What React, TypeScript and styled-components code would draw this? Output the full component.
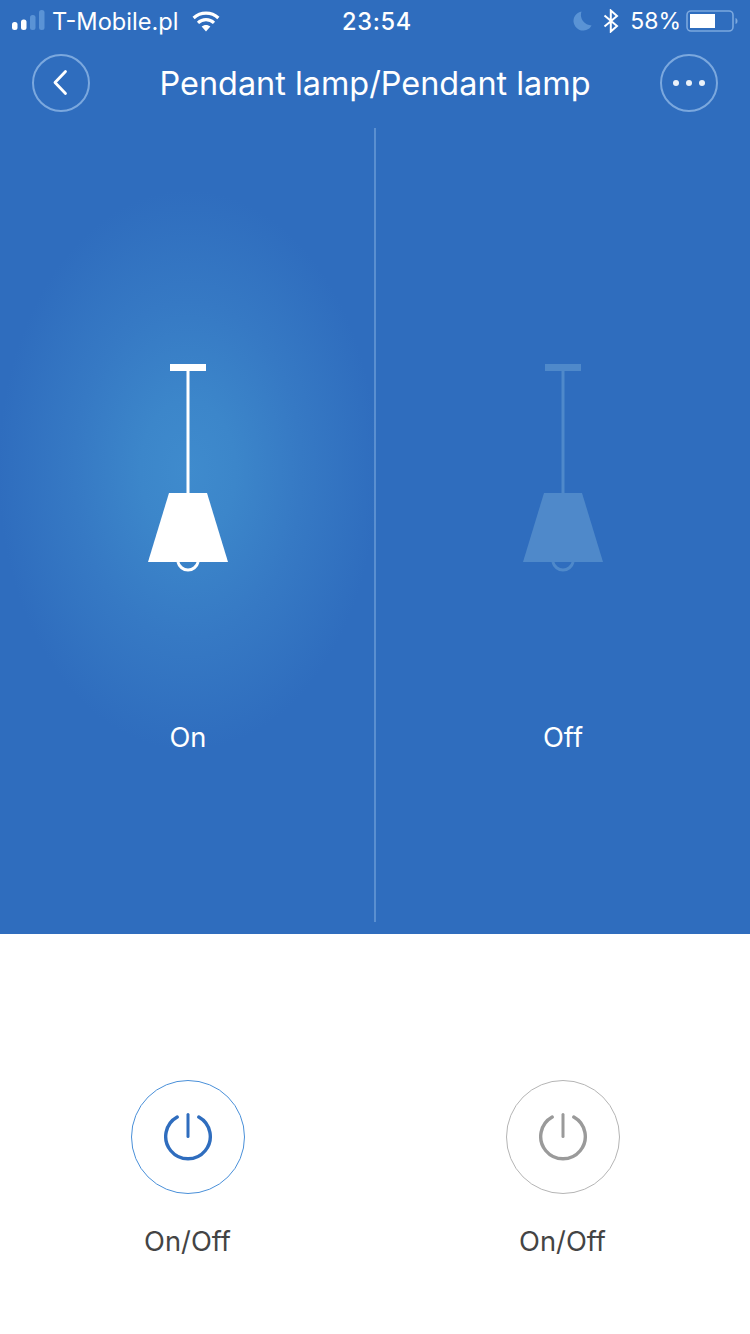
import styled, { createGlobalStyle } from "styled-components";

const BLUE = "#2f6dbe";
const DIM = "#5a93d5";
const FONT = `Inter, "Noto Sans", "Liberation Sans", sans-serif`;

const GlobalStyle = createGlobalStyle`
  html, body {
    margin: 0;
    padding: 0;
    background: #fff;
    font-family: ${FONT};
  }
  * {
    box-sizing: border-box;
  }
`;

const Page = styled.div`
  width: 750px;
  height: 1334px;
  display: flex;
  flex-direction: column;
  overflow: hidden;
`;

const TopArea = styled.div`
  height: 934px;
  background: ${BLUE};
  color: #fff;
  display: flex;
  flex-direction: column;
`;

const StatusBar = styled.div`
  height: 42px;
  display: grid;
  grid-template-columns: 1fr auto 1fr;
  align-items: center;
  padding: 0 12px;
  font-size: 23.6px;
`;

const StatusLeft = styled.div`
  display: flex;
  align-items: center;
`;

const StatusRight = styled.div`
  display: flex;
  align-items: center;
  justify-content: flex-end;
`;

const Carrier = styled.span`
  margin-left: 7px;
  margin-right: 14px;
`;

const Clock = styled.span`
  font-weight: 500;
  letter-spacing: 0.7px;
  margin-left: 4px;
`;

const Percent = styled.span`
  font-size: 23px;
  margin-left: 11px;
  margin-right: 5px;
`;

const NavBar = styled.div`
  height: 86px;
  display: flex;
  align-items: flex-start;
  justify-content: space-between;
  padding: 12px 32px 0;
`;

const RoundButton = styled.div`
  width: 58px;
  height: 58px;
  border-radius: 50%;
  border: 2px solid #7ba8de;
  display: flex;
  align-items: center;
  justify-content: center;
`;

const Title = styled.div`
  font-size: 32.4px;
  line-height: 60px;
  font-weight: 400;
  white-space: nowrap;
`;

const Panels = styled.div`
  flex: 1;
  display: flex;
`;

const LampColumn = styled.div<{ $glow?: boolean }>`
  width: 374px;
  height: 806px;
  padding-top: 236px;
  padding-left: ${(p) => (p.$glow ? "2px" : "0")};
  display: flex;
  flex-direction: column;
  align-items: center;
  background: ${(p) =>
    p.$glow
      ? "radial-gradient(ellipse 190px 280px at 188px 342px, #3f8bcd 0%, #3c86ca 25%, #3679c4 60%, #2f6dbe 100%)"
      : "none"};
`;

const Divider = styled.div`
  width: 2px;
  height: 794px;
  background: #5a8fd0;
`;

const LampIcon = styled.svg<{ $off?: boolean }>`
  display: block;
  width: 80px;
  height: 208px;
  color: ${(p) => (p.$off ? "#4f89ca" : "#fff")};
`;

const LampLabel = styled.div`
  margin-top: 149px;
  font-size: 27.3px;
  line-height: 34px;
`;

const Controls = styled.div`
  flex: 1;
  display: flex;
  padding-top: 146px;
`;

const Control = styled.div`
  flex: 1;
  display: flex;
  flex-direction: column;
  align-items: center;
`;

const PowerButton = styled.div<{ $color: string }>`
  width: 114px;
  height: 114px;
  border-radius: 50%;
  border: 1px solid ${(p) => p.$color};
  display: flex;
  align-items: center;
  justify-content: center;
`;

const ControlLabel = styled.div`
  margin-top: 31px;
  font-size: 27.3px;
  line-height: 34px;
  color: #444;
`;

const SignalBars = () => (
  <svg width="33" height="22" viewBox="0 0 33 22" style={{ display: "block" }}>
    <rect x="0" y="12" width="5.5" height="8" rx="2.5" fill="#fff" />
    <rect x="9" y="9.5" width="5.5" height="10.5" rx="2.5" fill="#fff" />
    <rect x="18" y="5" width="5.5" height="15" rx="2.5" fill={DIM} />
    <rect x="27" y="0" width="5.5" height="20" rx="2.5" fill={DIM} />
  </svg>
);

const WifiIcon = () => (
  <svg width="28" height="21" viewBox="0 0 28 21" style={{ display: "block" }}>
    <path d="M14 20.5 L9.6 15.6 C12 13.4 16 13.4 18.4 15.6 Z" fill="#fff" />
    <path d="M6 11.8 C10.5 7.6 17.5 7.6 22 11.8" fill="none" stroke="#fff" strokeWidth="3.2" />
    <path d="M1.6 7 C8.6 0.6 19.4 0.6 26.4 7" fill="none" stroke="#fff" strokeWidth="3.2" />
  </svg>
);

const MoonIcon = () => (
  <svg width="19" height="20" viewBox="0 0 19 20" style={{ display: "block", marginRight: 11 }}>
    <path d="M8.5 0.5 A9.6 9.6 0 1 0 18.6 14.4 A10.5 10.5 0 0 1 8.5 0.5 Z" fill={DIM} />
  </svg>
);

const BluetoothIcon = () => (
  <svg width="16" height="24" viewBox="0 0 16 24" style={{ display: "block" }}>
    <path
      d="M1.5 6.5 L14 17 L7.8 22.5 V1.5 L14 7 L1.5 17.5"
      fill="none"
      stroke="#fff"
      strokeWidth="2"
    />
  </svg>
);

const Battery = () => (
  <svg width="52" height="22" viewBox="0 0 52 22" style={{ display: "block" }}>
    <rect x="1" y="1" width="46" height="20" rx="4" fill="none" stroke="#7ba8de" strokeWidth="1.6" />
    <rect x="4" y="4" width="25" height="14" fill="#fff" />
    <path d="M49.5 8 C51 8.5 51.5 9.5 51.5 11 C51.5 12.5 51 13.5 49.5 14 Z" fill="#7ba8de" />
  </svg>
);

const BackChevron = () => (
  <svg width="20" height="30" viewBox="0 0 20 30">
    <path
      d="M14.5 3.5 L4 14.5 L14.5 25.5"
      fill="none"
      stroke="#fff"
      strokeWidth="2.8"
      strokeLinecap="round"
      strokeLinejoin="round"
    />
  </svg>
);

const MoreDots = () => (
  <svg width="34" height="8" viewBox="0 0 34 8">
    <circle cx="4" cy="4" r="3" fill="#fff" fillOpacity="0.9" />
    <circle cx="17" cy="4" r="3" fill="#fff" fillOpacity="0.9" />
    <circle cx="30" cy="4" r="3" fill="#fff" fillOpacity="0.9" />
  </svg>
);

const Lamp = ({ off }: { off?: boolean }) => (
  <LampIcon $off={off} viewBox="0 0 80 208">
    <rect x="22" y="0" width="36" height="7" fill="currentColor" />
    <rect x="38.5" y="7" width="3" height="122" fill="currentColor" />
    <path d="M21 129 H59 L80 198 H0 Z" fill="currentColor" />
    <path
      d="M29.9 198 A10.4 10.4 0 0 0 50.1 198"
      fill="none"
      stroke="currentColor"
      strokeWidth="3"
    />
  </LampIcon>
);

const PowerIcon = ({ color }: { color: string }) => (
  <svg width="50" height="50" viewBox="0 0 50 50">
    <path
      d="M14.2 5 A22.3 22.3 0 1 0 35.8 5"
      fill="none"
      stroke={color}
      strokeWidth="3.4"
      strokeLinecap="round"
    />
    <line x1="25" y1="2.5" x2="25" y2="24.5" stroke={color} strokeWidth="3" strokeLinecap="round" />
  </svg>
);

export default function App() {
  return (
    <Page>
      <GlobalStyle />
      <TopArea>
        <StatusBar>
          <StatusLeft>
            <SignalBars />
            <Carrier>T-Mobile.pl</Carrier>
            <WifiIcon />
          </StatusLeft>
          <Clock>23:54</Clock>
          <StatusRight>
            <MoonIcon />
            <BluetoothIcon />
            <Percent>58%</Percent>
            <Battery />
          </StatusRight>
        </StatusBar>
        <NavBar>
          <RoundButton>
            <BackChevron />
          </RoundButton>
          <Title>Pendant lamp/Pendant lamp</Title>
          <RoundButton>
            <MoreDots />
          </RoundButton>
        </NavBar>
        <Panels>
          <LampColumn $glow>
            <Lamp />
            <LampLabel>On</LampLabel>
          </LampColumn>
          <Divider />
          <LampColumn>
            <Lamp off />
            <LampLabel>Off</LampLabel>
          </LampColumn>
        </Panels>
      </TopArea>
      <Controls>
        <Control>
          <PowerButton $color="#4a90d9">
            <PowerIcon color="#2f6dbe" />
          </PowerButton>
          <ControlLabel>On/Off</ControlLabel>
        </Control>
        <Control>
          <PowerButton $color="#b5b5b5">
            <PowerIcon color="#9a9a9a" />
          </PowerButton>
          <ControlLabel>On/Off</ControlLabel>
        </Control>
      </Controls>
    </Page>
  );
}
